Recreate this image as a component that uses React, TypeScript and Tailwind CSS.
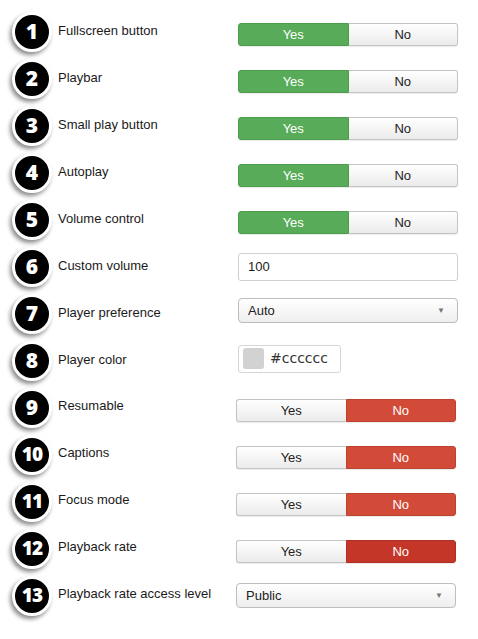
import React from 'react'

type Row =
    | { label: string; kind: 'toggle'; value: 'yes' | 'no'; dark?: boolean }
    | { label: string; kind: 'input'; value: string }
    | { label: string; kind: 'select'; value: string }
    | { label: string; kind: 'color'; value: string }

const rows: Row[] = [
    { label: 'Fullscreen button', kind: 'toggle', value: 'yes' },
    { label: 'Playbar', kind: 'toggle', value: 'yes' },
    { label: 'Small play button', kind: 'toggle', value: 'yes' },
    { label: 'Autoplay', kind: 'toggle', value: 'yes' },
    { label: 'Volume control', kind: 'toggle', value: 'yes' },
    { label: 'Custom volume', kind: 'input', value: '100' },
    { label: 'Player preference', kind: 'select', value: 'Auto' },
    { label: 'Player color', kind: 'color', value: '#cccccc' },
    { label: 'Resumable', kind: 'toggle', value: 'no' },
    { label: 'Captions', kind: 'toggle', value: 'no' },
    { label: 'Focus mode', kind: 'toggle', value: 'no' },
    { label: 'Playback rate', kind: 'toggle', value: 'no', dark: true },
    { label: 'Playback rate access level', kind: 'select', value: 'Public' },
]

// vertical nudge of each control, the source image is a composite of two screens
const nudge = ['mt-[6px]', 'mt-[6px]', 'mt-[6px]', 'mt-[6px]', 'mt-[6px]', '', '-mt-[6px]', '-mt-[4px]', 'mt-[6px]', 'mt-[6px]', 'mt-[6px]', 'mt-[6px]', '']

const Badge = ({ n }: { n: number }) => (
    <div className="w-[40px] h-[40px] shrink-0 rounded-full bg-black border-[3px] border-white shadow-[-2px_3px_4px_rgba(0,0,0,0.45)] flex items-center justify-center">
        <span className={`text-white font-extrabold leading-none ${n > 9 ? 'text-[19px] tracking-[-1px]' : 'text-[21px]'}`} style={{ fontFamily: '"Open Sans", sans-serif' }}>
            {n}
        </span>
    </div>
)

const Toggle = ({ value, dark }: { value: 'yes' | 'no'; dark?: boolean }) => {
    const off = 'bg-gradient-to-b from-white to-[#ebebeb] text-[#222] border border-[#c4c4c4]'
    return (
        <div className="flex w-[220px] h-[23px] text-[13px] rounded-[3px] shadow-[0_1px_1px_rgba(0,0,0,0.08)]">
            <div className={`flex-1 flex items-center justify-center rounded-l-[3px] ${value === 'yes' ? 'bg-[#58ab58] text-white border border-[#4c9c4c]' : off + ' border-r-0'}`}>
                Yes
            </div>
            <div className={`flex-1 flex items-center justify-center rounded-r-[3px] ${value === 'no' ? (dark ? 'bg-[#c43627] border border-[#b02f22]' : 'bg-[#d24b38] border border-[#bf4130]') + ' text-white' : off + ' border-l-0'}`}>
                No
            </div>
        </div>
    )
}

const Select = ({ value }: { value: string }) => (
    <div className="flex items-center justify-between w-[220px] h-[25px] pl-[9px] pr-[12px] text-[13px] text-[#222] rounded-[4px] border border-[#bdbdbd] bg-gradient-to-b from-white to-[#eeeeee]">
        <span>{value}</span>
        <span className="text-[8px] text-[#777]">▼</span>
    </div>
)

const App = () => {
    return (
        <div className="w-[478px] h-[639px] bg-white pt-[8px] pl-[12px]" style={{ fontFamily: '"Liberation Sans", Arial, sans-serif' }}>
            {rows.map((row, i) => {
                const late = i >= 8
                return (
                    <div key={i} className="flex items-center h-[47px]">
                        <Badge n={i + 1} />
                        <div className={`text-[13px] text-[#1a1a1a] ml-[6px] ${late ? 'w-[178px] -mt-[4px]' : 'w-[180px] -mt-[1px]'}`}>
                            {row.label}
                        </div>
                        <div className={nudge[i]}>
                            {row.kind === 'toggle' && <Toggle value={row.value} dark={row.dark} />}
                            {row.kind === 'input' && (
                                <div className="flex items-center w-[220px] h-[28px] pl-[9px] text-[13px] text-[#222] rounded-[3px] border border-[#cfcfcf] bg-white">
                                    {row.value}
                                </div>
                            )}
                            {row.kind === 'select' && <Select value={row.value} />}
                            {row.kind === 'color' && (
                                <div className="flex items-center w-[103px] h-[28px] pl-[4px] rounded-[3px] border border-[#d6d6d6] bg-white">
                                    <div className="w-[21px] h-[21px] rounded-[3px] bg-[#d2d2d2]" />
                                    <span className="ml-[6px] text-[14px] text-[#333]" style={{ fontFamily: '"DejaVu Sans", Verdana, sans-serif' }}>
                                        {row.value}
                                    </span>
                                </div>
                            )}
                        </div>
                    </div>
                )
            })}
        </div>
    )
}

export default App
